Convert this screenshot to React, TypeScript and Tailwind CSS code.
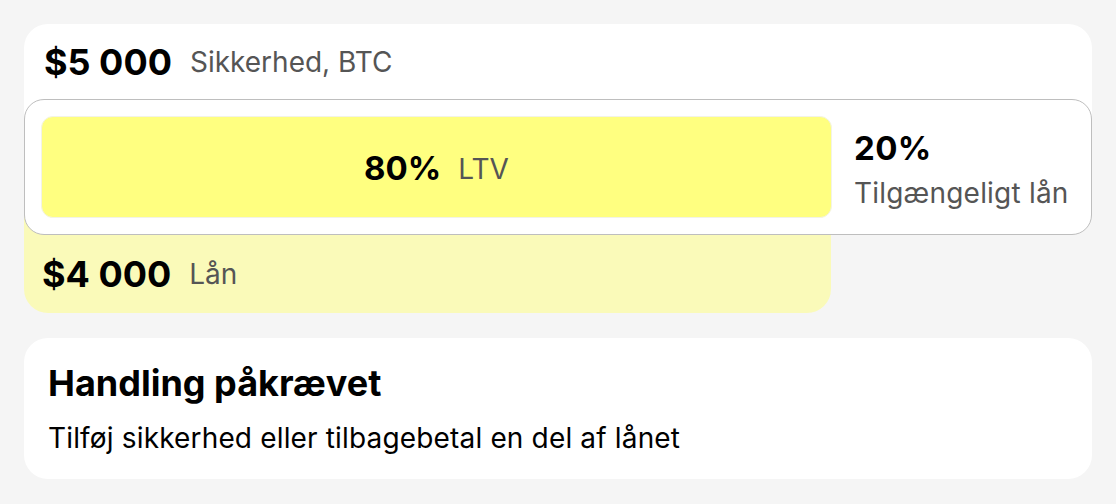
import React from "react";

export default function App() {
  return (
    <div
      className="min-h-[504px] w-[1116px] bg-[#f5f5f5] px-6 pt-6 pb-6 flex flex-col gap-[25px]"
      style={{ fontFamily: "Inter, 'Noto Sans', sans-serif" }}
    >
      <div className="flex flex-col">
        <div className="h-[75px] bg-white rounded-t-[24px] flex items-center pl-5 gap-[18px]">
          <span className="text-[36px] leading-none font-bold text-black">$5 000</span>
          <span className="text-[28px] leading-none text-[#555]">Sikkerhed, BTC</span>
        </div>
        <div className="relative">
          <div className="absolute inset-x-0 top-0 h-1/2 bg-white" />
          <div className="absolute left-0 bottom-0 h-1/2 w-[807px] bg-[#fafab9]" />
          <div className="relative h-[136px] rounded-[20px] border border-[#bebebe] bg-white p-4 flex items-center gap-[22px]">
            <div className="w-[791px] h-[102px] rounded-[12px] bg-[#ffff80] border border-[#f3f3e6] flex items-center justify-center gap-[17px] pt-[3px]">
              <span className="text-[33px] leading-none font-bold text-black">80%</span>
              <span className="text-[28px] leading-none text-[#555]">LTV</span>
            </div>
            <div className="flex flex-col gap-[14px] pt-[4px]">
              <span className="text-[33px] leading-none font-bold text-black tracking-[0.4px]">20%</span>
              <span className="text-[28px] leading-none text-[#555] tracking-[0.2px]">Tilgængeligt lån</span>
            </div>
          </div>
        </div>
        <div className="h-[78px] w-[807px] bg-[#fafab9] rounded-b-[24px] flex items-center pb-[1px] pl-[18px] gap-[18px]">
          <span className="text-[36px] leading-none font-bold text-black">$4 000</span>
          <span className="text-[28px] leading-none text-[#555]">Lån</span>
        </div>
      </div>
      <div className="h-[141px] bg-white rounded-[24px] px-6 pt-[27px] flex flex-col gap-[23px]">
        <span className="text-[36px] leading-none font-bold text-black">Handling påkrævet</span>
        <span className="text-[28px] leading-none text-black tracking-[0.16px]">Tilføj sikkerhed eller tilbagebetal en del af lånet</span>
      </div>
    </div>
  );
}
